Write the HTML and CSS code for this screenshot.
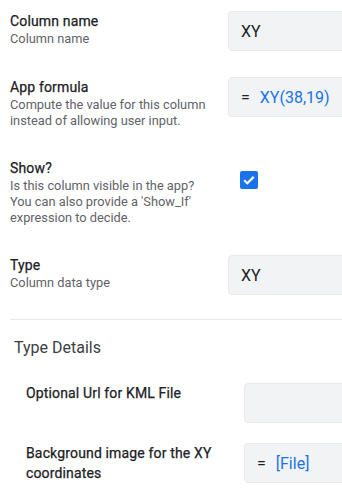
FILE: index.html
```html
<!doctype html>
<html lang="en">
  <head>
    <meta charset="UTF-8" />
    <meta name="viewport" content="width=device-width, initial-scale=1.0" />
    <title>Column settings</title>
    <link rel="stylesheet" href="styles.css">
  </head>
  <body>
    <div class="column-editor">
      <div class="settings">
        <div class="setting-row">
          <div class="setting-label">
            <div class="setting-title">Column name</div>
            <div class="setting-desc">Column name</div>
          </div>
          <div class="setting-field">
            <div class="text-input">XY</div>
          </div>
        </div>

        <div class="setting-row">
          <div class="setting-label">
            <div class="setting-title">App formula</div>
            <div class="setting-desc">Compute the value for this column instead of allowing user input.</div>
          </div>
          <div class="setting-field">
            <div class="text-input"><span class="eq">=</span><span class="expr">XY(38,19)</span></div>
          </div>
        </div>

        <div class="setting-row">
          <div class="setting-label">
            <div class="setting-title">Show?</div>
            <div class="setting-desc">Is this column visible in the app? You can also provide a 'Show_If' expression to decide.</div>
          </div>
          <div class="setting-field">
            <span class="checkbox">
              <svg width="18" height="18" viewBox="0 0 18 18">
                <path d="M4.2 9.2l3.1 3.1 6.4-6.4" fill="none" stroke="#fff" stroke-width="2.2" />
              </svg>
            </span>
          </div>
        </div>

        <div class="setting-row">
          <div class="setting-label">
            <div class="setting-title">Type</div>
            <div class="setting-desc">Column data type</div>
          </div>
          <div class="setting-field">
            <div class="text-input">XY</div>
          </div>
        </div>
      </div>

      <hr class="divider">

      <div class="type-details">
        <h2>Type Details</h2>
        <div class="settings nested">
          <div class="setting-row">
            <div class="setting-label">
              <div class="setting-title">Optional Url for KML File</div>
            </div>
            <div class="setting-field">
              <div class="text-input"></div>
            </div>
          </div>

          <div class="setting-row">
            <div class="setting-label">
              <div class="setting-title">Background image for the XY coordinates</div>
            </div>
            <div class="setting-field">
              <div class="text-input"><span class="eq">=</span><span class="expr">[File]</span></div>
            </div>
          </div>
        </div>
      </div>
    </div>
  </body>
</html>
```

FILE: styles.css
```css
* {
  margin: 0;
  padding: 0;
  box-sizing: border-box;
}

html,
body {
  overflow: hidden;
}

body {
  font-family: Roboto, "Liberation Sans", sans-serif;
  background: #fff;
  color: #202124;
}

.column-editor {
  width: 400px;
}

.settings {
  display: flex;
  flex-direction: column;
  gap: 26px;
  padding: 11px 0 24px 10px;
}

.setting-row {
  display: flex;
  align-items: flex-start;
}

.setting-label {
  width: 218px;
  flex-shrink: 0;
  padding-right: 18px;
  padding-bottom: 3px;
}

/* no medium cut installed, thicken the regular face a little */
.setting-title {
  font-size: 14px;
  font-weight: 400;
  line-height: 20px;
  letter-spacing: 0.15px;
  -webkit-text-stroke: 0.25px currentColor;
}

.setting-desc {
  font-size: 12.8px;
  line-height: 16px;
  color: #5f6368;
}

.setting-field {
  flex: 1;
}

.text-input {
  height: 40px;
  display: flex;
  align-items: center;
  padding: 0 12px;
  background: #f1f3f4;
  border: 1px solid #e8eaed;
  border-radius: 4px;
  font-size: 16px;
  color: #202124;
}

.eq {
  margin-right: 10px;
}

.expr {
  color: #1a73e8;
}

.checkbox {
  display: block;
  width: 18px;
  height: 18px;
  margin: 13px 0 0 12px;
  background: #1a73e8;
  border-radius: 2px;
}

.checkbox svg {
  display: block;
}

.divider {
  border: none;
  border-top: 1px solid #e8eaed;
  margin-left: 10px;
}

.type-details h2 {
  font-size: 16px;
  font-weight: 400;
  line-height: 24px;
  color: #3c4043;
  margin: 16px 0 0 14px;
}

.settings.nested {
  gap: 20px;
  padding: 23px 0 0 26px;
}
```
